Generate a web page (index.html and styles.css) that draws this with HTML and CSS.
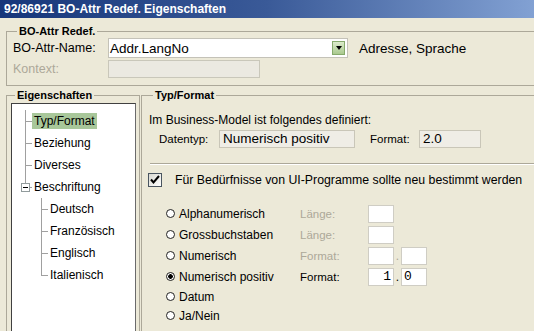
FILE: index.html
```html
<!DOCTYPE html>
<html lang="de">
<head>
  <meta charset="UTF-8" />
  <title>BO-Attr Redef. Eigenschaften</title>
  <link rel="stylesheet" href="styles.css">
</head>
<body>
  <div class="titlebar">92/86921 BO-Attr Redef. Eigenschaften</div>

  <div class="content">
    <fieldset class="group group-top">
      <legend>BO-Attr Redef.</legend>
      <div class="field-row">
        <label class="field-label">BO-Attr-Name:</label>
        <div class="combo">
          <span class="combo-value">Addr.LangNo</span>
          <span class="combo-button"></span>
        </div>
        <span class="field-note">Adresse, Sprache</span>
      </div>
      <div class="field-row">
        <label class="field-label disabled">Kontext:</label>
        <div class="textbox-disabled"></div>
      </div>
    </fieldset>

    <div class="split">
      <fieldset class="group group-tree">
        <legend>Eigenschaften</legend>
        <div class="tree">
          <div class="tree-row"><span class="branch"></span><span class="tree-label selected">Typ/Format</span></div>
          <div class="tree-row"><span class="branch"></span><span class="tree-label">Beziehung</span></div>
          <div class="tree-row"><span class="branch"></span><span class="tree-label">Diverses</span></div>
          <div class="tree-row"><span class="branch branch-last"><span class="expander"></span></span><span class="tree-label">Beschriftung</span></div>
          <div class="tree-row tree-child"><span class="branch"></span><span class="tree-label">Deutsch</span></div>
          <div class="tree-row tree-child"><span class="branch"></span><span class="tree-label">Französisch</span></div>
          <div class="tree-row tree-child"><span class="branch"></span><span class="tree-label">Englisch</span></div>
          <div class="tree-row tree-child"><span class="branch branch-last"></span><span class="tree-label">Italienisch</span></div>
        </div>
      </fieldset>

      <fieldset class="group group-detail">
        <legend>Typ/Format</legend>
        <div class="detail-intro">Im Business-Model ist folgendes definiert:</div>
        <div class="defined-row">
          <span class="defined-label">Datentyp:</span>
          <span class="readonly-box wide">Numerisch positiv</span>
          <span class="defined-label format-label">Format:</span>
          <span class="readonly-box short">2.0</span>
        </div>

        <div class="separator"></div>

        <div class="check-row">
          <span class="checkbox">
            <svg width="12" height="12" viewBox="0 0 12 12"><polyline points="2,5.5 4.5,8.5 10,2" fill="none" stroke="#000" stroke-width="2"/></svg>
          </span>
          <span class="check-label">Für Bedürfnisse von UI-Programme sollte neu bestimmt werden</span>
        </div>

        <div class="type-list">
          <div class="type-row">
            <span class="radio-option"><span class="radio"></span>Alphanumerisch</span>
            <span class="type-label disabled">Länge:</span>
            <span class="mini-box"></span>
          </div>
          <div class="type-row">
            <span class="radio-option"><span class="radio"></span>Grossbuchstaben</span>
            <span class="type-label disabled">Länge:</span>
            <span class="mini-box"></span>
          </div>
          <div class="type-row">
            <span class="radio-option"><span class="radio"></span>Numerisch</span>
            <span class="type-label disabled">Format:</span>
            <span class="mini-box"></span>
            <span class="dot-sep disabled">.</span>
            <span class="mini-box"></span>
          </div>
          <div class="type-row">
            <span class="radio-option"><span class="radio checked"></span>Numerisch positiv</span>
            <span class="type-label">Format:</span>
            <span class="mini-box right">1</span>
            <span class="dot-sep">.</span>
            <span class="mini-box">0</span>
          </div>
          <div class="type-row short">
            <span class="radio-option"><span class="radio"></span>Datum</span>
          </div>
          <div class="type-row short">
            <span class="radio-option"><span class="radio"></span>Ja/Nein</span>
          </div>
        </div>
      </fieldset>
    </div>
  </div>
</body>
</html>
```

FILE: styles.css
```css
* {
  box-sizing: border-box;
}

body {
  margin: 0;
  width: 534px;
  height: 331px;
  overflow: hidden;
  background-color: #ece9d8;
  color: #000;
  font-family: "Liberation Sans", Arial, sans-serif;
  font-size: 12px;
}

.disabled {
  color: #aca899;
}

.titlebar {
  height: 18px;
  line-height: 18px;
  padding-left: 4px;
  color: #fff;
  font-weight: bold;
  font-size: 12px;
  white-space: nowrap;
  background: linear-gradient(90deg, #16367a 0%, #3a5a98 50%, #82a1d3 100%);
}

.content {
  padding: 6px 0 0 6px;
}

/* group boxes, cut off by the window on the right and bottom */
.group {
  margin: 0;
  padding: 0;
  min-width: 0;
  border: 1px solid #aca899;
}

.group legend {
  margin-left: 4px;
  padding: 0 2px;
  font-size: 11px;
  font-weight: bold;
  line-height: 14px;
}

.group-top {
  width: 528px;
  padding: 0 0 7px 6px;
  border-right: 0;
}

.field-row {
  display: flex;
  align-items: center;
}

.field-row + .field-row {
  margin-top: 2px;
}

.field-label {
  width: 95px;
  font-size: 12.5px;
}

.combo {
  width: 240px;
  height: 20px;
  display: flex;
  align-items: center;
  justify-content: space-between;
  padding: 0 2px 0 1px;
  background: #fff;
  border: 1px solid #c4c2b8;
}

.combo-value {
  font-size: 13.5px;
}

.combo-button {
  width: 13px;
  height: 14px;
  display: flex;
  align-items: center;
  justify-content: center;
  border: 1px solid #86aa6c;
  background: linear-gradient(#dcebcc, #a9c98e);
}

.combo-button::after {
  content: "";
  border-left: 3.5px solid transparent;
  border-right: 3.5px solid transparent;
  border-top: 4px solid #000;
}

.field-note {
  margin-left: 11px;
  font-size: 13.5px;
}

.textbox-disabled {
  width: 152px;
  height: 18px;
  background: #ebe9e1;
  border: 1px solid #c9c7ba;
}

.split {
  display: flex;
  gap: 1px;
  margin-top: 2px;
}

/* tree */
.group-tree {
  width: 134px;
  flex: none;
  padding: 1px 3px 0 4px;
  border-bottom: 0;
}

.tree {
  height: 228px;
  padding-top: 6px;
  background: #fff;
  border: 1px solid #404040;
  border-right-color: #6b6b6b;
  border-bottom: 0;
}

.tree-row {
  display: flex;
  align-items: center;
  height: 22px;
}

.tree-child {
  padding-left: 16px;
}

.branch {
  width: 20px;
  flex: none;
  align-self: stretch;
  display: flex;
  align-items: center;
  background:
    linear-gradient(#a0a0a0, #a0a0a0) 13px 0 / 1px 100% no-repeat,
    linear-gradient(#a0a0a0, #a0a0a0) 13px 50% / 7px 1px no-repeat;
}

.branch-last {
  background-size: 1px 50%, 7px 1px;
}

.expander {
  width: 9px;
  height: 9px;
  margin-left: 9px;
  border: 1px solid #919b9c;
  background: linear-gradient(#000, #000) center / 5px 1px no-repeat, #fff;
}

.tree-label {
  padding: 0 2px;
  line-height: 16px;
  white-space: nowrap;
}

.tree-label.selected {
  background: #a8c79a;
}

/* detail */
.group-detail {
  width: 393px;
  flex: none;
  padding: 0 0 6px 7px;
  border-right: 0;
  border-bottom: 0;
}

.detail-intro {
  margin-top: 11px;
  line-height: 14px;
  white-space: nowrap;
}

.defined-row {
  display: flex;
  align-items: center;
  height: 18px;
  margin-top: 3px;
  padding-left: 10px;
}

.defined-label {
  width: 60px;
  font-size: 11.5px;
}

.format-label {
  width: 49px;
  margin-left: 15px;
}

.readonly-box {
  height: 18px;
  padding-left: 3px;
  font-size: 13.5px;
  line-height: 16px;
  background: #efede6;
  border: 1px solid #c9c6b8;
  white-space: nowrap;
}

.readonly-box.wide {
  width: 136px;
}

.readonly-box.short {
  width: 62px;
}

.separator {
  margin: 15px 0 0 1px;
  border-top: 1px solid #aca899;
  border-bottom: 1px solid #fff;
}

.check-row {
  display: flex;
  align-items: center;
  height: 16px;
  margin-top: 7px;
}

.checkbox {
  width: 14px;
  height: 14px;
  margin-left: -1px;
  flex: none;
  display: flex;
  align-items: center;
  justify-content: center;
  border: 1px solid #4a5560;
  background: linear-gradient(135deg, #d8d8d0, #fff);
}

.check-label {
  margin-left: 13px;
  font-size: 12.3px;
  white-space: nowrap;
}

.type-list {
  margin-top: 15px;
  padding-left: 17px;
}

.type-row {
  display: flex;
  align-items: center;
  height: 21px;
}

.type-row.short {
  height: 19px;
}

.radio-option {
  width: 134px;
  display: flex;
  align-items: center;
  gap: 4px;
  white-space: nowrap;
}

.radio {
  width: 9px;
  height: 9px;
  flex: none;
  border-radius: 50%;
  border: 1px solid #222;
  background: #fff;
}

.radio.checked {
  background: radial-gradient(circle, #000 0 2px, #fff 2.6px);
}

.type-label {
  width: 68px;
  font-size: 11.5px;
}

.mini-box {
  width: 26px;
  height: 18px;
  padding: 0 2px;
  font-family: "Liberation Mono", monospace;
  font-size: 13px;
  line-height: 16px;
  background: #fff;
  border: 1px solid #cfcdc4;
}

.mini-box.right {
  text-align: right;
}

.dot-sep {
  width: 7px;
  text-align: center;
}
```
